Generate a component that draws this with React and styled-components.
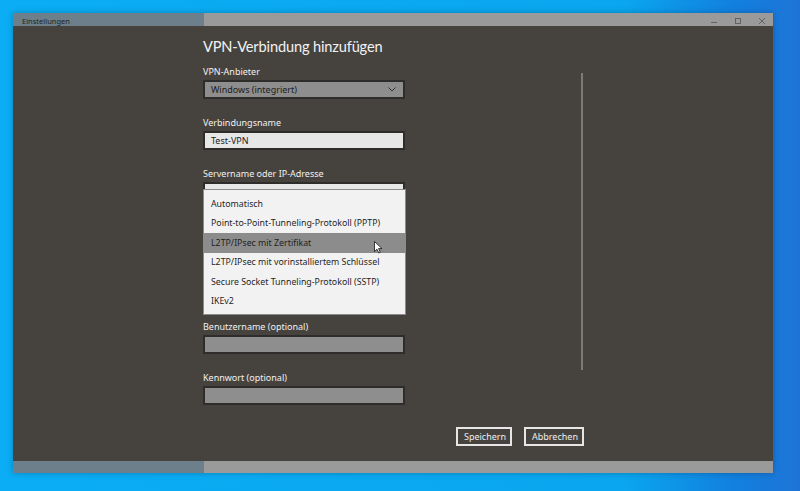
import React from "react";
import styled, { createGlobalStyle } from "styled-components";

const Global = createGlobalStyle`
  html, body { margin: 0; padding: 0; }
  body {
    width: 800px; height: 491px; overflow: hidden;
    font-family: "Noto Sans", "Open Sans", sans-serif;
  }
  #root { width: 800px; height: 491px; }
`;

const Desktop = styled.div`
  width: 800px;
  height: 491px;
  box-sizing: border-box;
  padding: 13px 27px 18px 13px;
  background: linear-gradient(90deg, #0badf4 0%, #0aa6ef 78%, #127fde 92%, #1e74d6 100%);
`;

const Window = styled.div`
  width: 760px;
  height: 460px;
  display: flex;
  flex-direction: column;
  background: #46433f;
  box-shadow: 0 0 6px rgba(0, 0, 0, 0.25);
`;

const Bar = styled.div`
  display: flex;
  height: ${(p) => p.$h}px;
  flex: none;
`;

const BarNav = styled.div`
  width: 191px;
  background: #6c7f8a;
  display: flex;
  align-items: flex-end;
  padding-left: 9px;
  box-sizing: border-box;
  font-size: 7.5px;
  color: #1f2426;
  line-height: 10px;
`;

const BarMain = styled.div`
  flex: 1;
  background: #9a9a9a;
  display: flex;
  justify-content: flex-end;
  align-items: flex-end;
  gap: 14px;
  padding-right: 6px;
`;

const Ctrl = styled.span`
  width: 10px;
  height: 10px;
  display: flex;
  align-items: center;
  justify-content: center;
`;

const Body = styled.div`
  flex: 1;
  display: flex;
  position: relative;
`;

const Nav = styled.div`
  width: 190px;
  flex: none;
`;

const Content = styled.div`
  padding-top: 11px;
  width: 381px;
  display: flex;
  flex-direction: column;
`;

const Title = styled.h1`
  margin: 0 0 8px;
  font-family: Lato, "Noto Sans", sans-serif;
  font-weight: 400;
  font-size: 14.6px;
  letter-spacing: -0.15px;
  line-height: 20px;
  color: #f2f2f2;
`;

const Field = styled.div`
  position: relative;
  display: flex;
  flex-direction: column;
  gap: 1px;
  margin-bottom: 17px;
`;

const Spacer = styled.div`
  height: ${(p) => p.$h}px;
  flex: none;
`;

const Label = styled.label`
  font-size: 9px;
  line-height: 14px;
  color: #f0f0f0;
`;

const Box = styled.div`
  width: 202px;
  height: 19px;
  box-sizing: border-box;
  border: 2px solid #2e2d2b;
  background: ${(p) => (p.$light ? "#e7e7e7" : "#8e8e8e")};
  display: flex;
  align-items: center;
  justify-content: space-between;
  padding: 0 7px 0 6px;
  font-size: 9px;
  color: #1d1d1d;
`;

const Popup = styled.ul`
  position: absolute;
  left: 0;
  top: 22px;
  width: 203px;
  margin: 0;
  padding: 4px 0 3px;
  list-style: none;
  box-sizing: border-box;
  background: #f2f2f2;
  border: 1px solid #8b8b8b;
  z-index: 2;
`;

const Item = styled.li`
  height: 19.5px;
  display: flex;
  align-items: center;
  padding-left: 7px;
  font-size: 8.8px;
  color: #1f1f1f;
  background: ${(p) => (p.$hover ? "#8c8c8c" : "transparent")};
  position: relative;
`;

const Cursor = styled.svg`
  position: absolute;
  left: 170px;
  top: 8px;
`;

const Buttons = styled.div`
  display: flex;
  justify-content: flex-end;
  gap: 12px;
  margin-top: 5px;
`;

const Button = styled.button`
  height: 19px;
  box-sizing: border-box;
  border: 2px solid #e6e6e6;
  background: #46433f;
  color: #eeeeee;
  font-family: inherit;
  font-size: 9px;
  padding: 0 6px;
  width: ${(p) => p.$w}px;
`;

const Scroll = styled.div`
  position: absolute;
  left: 568px;
  top: 47px;
  width: 2px;
  height: 297px;
  background: #7c7a77;
`;

const Chevron = () => (
  <svg width="8" height="5" viewBox="0 0 8 5">
    <path d="M0.5 0.5 L4 4 L7.5 0.5" fill="none" stroke="#333" strokeWidth="1" />
  </svg>
);

const items = [
  "Automatisch",
  "Point-to-Point-Tunneling-Protokoll (PPTP)",
  "L2TP/IPsec mit Zertifikat",
  "L2TP/IPsec mit vorinstalliertem Schlüssel",
  "Secure Socket Tunneling-Protokoll (SSTP)",
  "IKEv2",
];

export default function App() {
  return (
    <>
      <Global />
      <Desktop>
        <Window>
          <Bar $h={13}>
            <BarNav>Einstellungen</BarNav>
            <BarMain>
              <Ctrl>
                <svg width="8" height="8" viewBox="0 0 8 8">
                  <path d="M1 5.5 H7" stroke="#555" strokeWidth="0.8" />
                </svg>
              </Ctrl>
              <Ctrl>
                <svg width="8" height="8" viewBox="0 0 8 8">
                  <rect x="1.5" y="1.5" width="5" height="5" fill="none" stroke="#555" strokeWidth="0.8" />
                </svg>
              </Ctrl>
              <Ctrl>
                <svg width="8" height="8" viewBox="0 0 8 8">
                  <path d="M1 1 L7 7 M7 1 L1 7" stroke="#555" strokeWidth="0.8" />
                </svg>
              </Ctrl>
            </BarMain>
          </Bar>
          <Body>
            <Nav />
            <Content>
              <Title>VPN-Verbindung hinzufügen</Title>
              <Field>
                <Label>VPN-Anbieter</Label>
                <Box>
                  Windows (integriert)
                  <Chevron />
                </Box>
              </Field>
              <Field>
                <Label>Verbindungsname</Label>
                <Box $light>Test-VPN</Box>
              </Field>
              <Field>
                <Label>Servername oder IP-Adresse</Label>
                <Box $light />
                <Popup>
                  {items.map((t, i) => (
                    <Item key={t} $hover={i === 2}>
                      {t}
                      {i === 2 && (
                        <Cursor width="9" height="13" viewBox="0 0 9 13">
                          <path d="M0.5 0.5 L0.5 10.5 L3 8.2 L4.8 12 L6.3 11.3 L4.6 7.6 L8 7.6 Z" fill="#fff" stroke="#111" strokeWidth="0.8" />
                        </Cursor>
                      )}
                    </Item>
                  ))}
                </Popup>
              </Field>
              <Spacer $h={102} />
              <Field>
                <Label>Benutzername (optional)</Label>
                <Box />
              </Field>
              <Field>
                <Label>Kennwort (optional)</Label>
                <Box />
              </Field>
              <Buttons>
                <Button $w={56}>Speichern</Button>
                <Button $w={60}>Abbrechen</Button>
              </Buttons>
            </Content>
            <Scroll />
          </Body>
          <Bar $h={12}>
            <BarNav />
            <BarMain />
          </Bar>
        </Window>
      </Desktop>
    </>
  );
}
